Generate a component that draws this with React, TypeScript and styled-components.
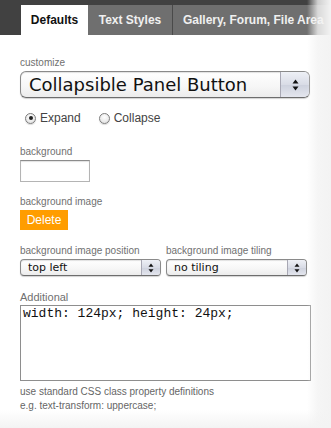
import React from "react";
import styled, { createGlobalStyle } from "styled-components";

const Global = createGlobalStyle`
  html, body { margin: 0; padding: 0; background: #f3f3f3; }
  body { font-family: "Liberation Sans", Arial, sans-serif; }
`;

const Page = styled.div`
  position: relative;
  width: 331px;
  height: 428px;
  overflow: hidden;
  background: #fff;
  &::after {
    content: "";
    position: absolute;
    top: 0;
    right: 0;
    width: 24px;
    height: 100%;
    background: linear-gradient(to right, rgba(243,243,243,0) 0%, rgba(243,243,243,0.8) 45%, #f3f3f3 100%);
    pointer-events: none;
  }
  &::before {
    content: "";
    position: absolute;
    left: 0;
    bottom: 0;
    width: 100%;
    height: 18px;
    background: linear-gradient(to bottom, rgba(243,243,243,0) 0%, #f3f3f3 100%);
    pointer-events: none;
    z-index: 1;
  }
`;

const TabBar = styled.div`
  display: flex;
  height: 35px;
  box-sizing: border-box;
  padding: 5px 0 0 21px;
  background: #414141;
`;

const Tab = styled.div<{ $active?: boolean; $width?: number; $divider?: boolean }>`
  height: 30px;
  box-sizing: border-box;
  width: ${(p) => (p.$width ? `${p.$width}px` : "auto")};
  flex: ${(p) => (p.$width ? "none" : "1")};
  padding: 0 ${(p) => (p.$width ? "0" : "10px")};
  display: flex;
  align-items: center;
  justify-content: ${(p) => (p.$width ? "center" : "flex-start")};
  font-size: 12px;
  font-weight: bold;
  white-space: nowrap;
  overflow: hidden;
  color: ${(p) => (p.$active ? "#111" : "#f0f0f0")};
  background: ${(p) => (p.$active ? "#fff" : "#6f6f6f")};
  border-left: ${(p) => (p.$divider ? "1px solid #4a4a4a" : "none")};
`;

const Body = styled.div`
  padding: 22px 21px 0 20px;
  display: flex;
  flex-direction: column;
`;

const Label = styled.div<{ $size?: number }>`
  font-size: ${(p) => p.$size ?? 10}px;
  color: #707070;
  line-height: 12px;
  margin-bottom: 2px;
`;

const SelectBox = styled.div<{ $big?: boolean }>`
  box-sizing: border-box;
  height: ${(p) => (p.$big ? 27 : 17)}px;
  border: 1px solid #8a8a8a;
  border-bottom-color: #6d6d6d;
  border-radius: ${(p) => (p.$big ? 6 : 4)}px;
  background: linear-gradient(#ffffff, #f6f6f6 60%, #ececec);
  box-shadow: inset 0 1px 1px rgba(0,0,0,0.12), 0 1px 1px rgba(0,0,0,0.18);
  display: flex;
  align-items: center;
  overflow: hidden;
`;

const SelectText = styled.span<{ $big?: boolean }>`
  flex: 1;
  padding-left: ${(p) => (p.$big ? 8 : 7)}px;
  font-family: "DejaVu Sans", Verdana, sans-serif;
  font-size: ${(p) => (p.$big ? 18 : 11)}px;
  color: #111;
  white-space: nowrap;
`;

const Stepper = styled.span<{ $big?: boolean }>`
  width: ${(p) => (p.$big ? 28 : 18)}px;
  height: 100%;
  border-left: 1px solid #a8a8b4;
  background: linear-gradient(#eef0f6, #d9dce6 50%, #cdd1dd 51%, #e4e6ee);
  display: flex;
  align-items: center;
  justify-content: center;
`;

const Arrows = ({ big }: { big?: boolean }) => (
  <svg width={big ? 7 : 6} height={big ? 12 : 10} viewBox="0 0 7 12">
    <path d="M3.5 0.5 L6.5 4.5 L0.5 4.5 Z" fill="#111" />
    <path d="M3.5 11.5 L6.5 7.5 L0.5 7.5 Z" fill="#111" />
  </svg>
);

const Select = ({ value, big }: { value: string; big?: boolean }) => (
  <SelectBox $big={big}>
    <SelectText $big={big}>{value}</SelectText>
    <Stepper $big={big}>
      <Arrows big={big} />
    </Stepper>
  </SelectBox>
);

const RadioRow = styled.div`
  display: flex;
  align-items: center;
  gap: 18px;
  padding: 13px 0 0 5px;
`;

const RadioItem = styled.label`
  display: flex;
  align-items: center;
  gap: 4px;
  font-size: 12px;
  color: #444;
`;

const RadioDot = styled.span<{ $checked?: boolean }>`
  width: 11px;
  height: 11px;
  box-sizing: border-box;
  border-radius: 50%;
  border: 1px solid #7d7d7d;
  background: radial-gradient(circle at 50% 35%, #ffffff, #dcdcdc);
  box-shadow: 0 1px 1px rgba(0,0,0,0.15);
  display: flex;
  align-items: center;
  justify-content: center;
  &::after {
    content: "";
    width: 4px;
    height: 4px;
    border-radius: 50%;
    background: #222;
    display: ${(p) => (p.$checked ? "block" : "none")};
  }
`;

const Field = styled.div<{ $top: number }>`
  margin-top: ${(p) => p.$top}px;
  display: flex;
  flex-direction: column;
`;

const TextInput = styled.div`
  width: 70px;
  height: 22px;
  box-sizing: border-box;
  border: 1px solid #b4b4b4;
  border-top-color: #8c8c8c;
  box-shadow: inset 0 1px 1px rgba(0,0,0,0.12);
  background: #fff;
`;

const DeleteButton = styled.div`
  width: 48px;
  height: 20px;
  background: #ff9d00;
  color: #fff;
  font-size: 12px;
  display: flex;
  align-items: center;
  justify-content: center;
`;

const Pair = styled.div`
  margin-top: 15px;
  display: grid;
  grid-template-columns: 141px 141px;
  column-gap: 5px;
`;

const TextArea = styled.div`
  width: 291px;
  height: 76px;
  box-sizing: border-box;
  border: 1px solid #8e8e8e;
  padding: 0 2px;
  font-family: "Liberation Mono", "Courier New", monospace;
  font-size: 13px;
  line-height: 15px;
  color: #111;
  background: #fff;
`;

const Help = styled.div`
  margin-top: 4px;
  font-size: 10px;
  line-height: 14px;
  color: #666;
`;

export default function App() {
  return (
    <>
      <Global />
      <Page>
        <TabBar>
          <Tab $active $width={67}>Defaults</Tab>
          <Tab $width={84}>Text Styles</Tab>
          <Tab $divider>Gallery, Forum, File Area</Tab>
        </TabBar>
        <Body>
          <Label>customize</Label>
          <Select big value="Collapsible Panel Button" />
          <RadioRow>
            <RadioItem>
              <RadioDot $checked />
              Expand
            </RadioItem>
            <RadioItem>
              <RadioDot />
              Collapse
            </RadioItem>
          </RadioRow>
          <Field $top={21}>
            <Label>background</Label>
            <TextInput />
          </Field>
          <Field $top={14}>
            <Label>background image</Label>
            <DeleteButton>Delete</DeleteButton>
          </Field>
          <Pair>
            <div>
              <Label>background image position</Label>
              <Select value="top left" />
            </div>
            <div>
              <Label>background image tiling</Label>
              <Select value="no tiling" />
            </div>
          </Pair>
          <Field $top={15}>
            <Label $size={11}>Additional</Label>
            <TextArea>width: 124px; height: 24px;</TextArea>
          </Field>
          <Help>
            use standard CSS class property definitions
            <br />
            e.g. text-transform: uppercase;
          </Help>
        </Body>
      </Page>
    </>
  );
}
